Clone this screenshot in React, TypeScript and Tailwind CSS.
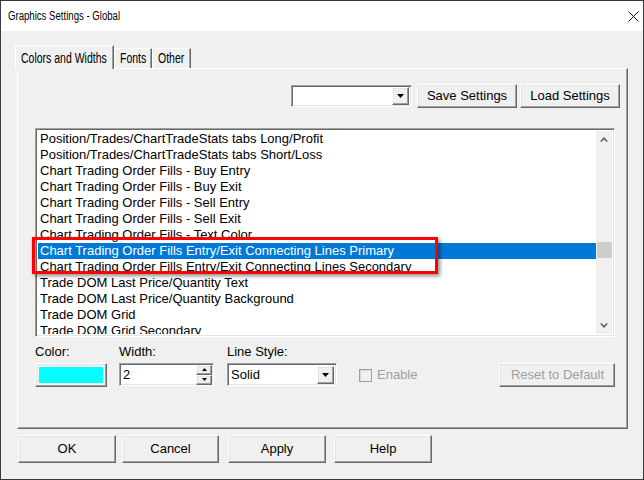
import React from "react";

const raised =
  "border border-t-white border-l-white border-r-[#696969] border-b-[#696969] shadow-[inset_-1px_-1px_0_#a0a0a0,inset_1px_1px_0_#e3e3e3] bg-[#f0f0f0]";
const sunken =
  "border border-t-[#a0a0a0] border-l-[#a0a0a0] border-r-white border-b-white shadow-[inset_1px_1px_0_#696969,inset_-1px_-1px_0_#e3e3e3]";

const items = [
  "Position/Trades/ChartTradeStats tabs Long/Profit",
  "Position/Trades/ChartTradeStats tabs Short/Loss",
  "Chart Trading Order Fills - Buy Entry",
  "Chart Trading Order Fills - Buy Exit",
  "Chart Trading Order Fills - Sell Entry",
  "Chart Trading Order Fills - Sell Exit",
  "Chart Trading Order Fills - Text Color",
  "Chart Trading Order Fills Entry/Exit Connecting Lines Primary",
  "Chart Trading Order Fills Entry/Exit Connecting Lines Secondary",
  "Trade DOM Last Price/Quantity Text",
  "Trade DOM Last Price/Quantity Background",
  "Trade DOM Grid",
  "Trade DOM Grid Secondary",
];

function DownArrow() {
  return (
    <svg width="7" height="4" viewBox="0 0 7 4">
      <path d="M0 0 H7 L3.5 4 Z" fill="#000" />
    </svg>
  );
}

function Button({ label, w, cls = "" }: { label: string; w: string; cls?: string }) {
  return (
    <div className={`${raised} ${w} h-[28px] flex items-center justify-center text-[13px] text-black ${cls}`}>
      {label}
    </div>
  );
}

const narrow = "inline-block whitespace-nowrap origin-left scale-x-[0.8]";
const narrowTab = "inline-block whitespace-nowrap origin-left scale-x-[0.75] text-[14px]";

export default function App() {
  return (
    <div className="w-[644px] h-[480px] bg-[#f0f0f0] border border-[#3a3a3a] flex flex-col font-['Liberation_Sans',Arial,sans-serif] text-[13px] text-black overflow-hidden">
      {/* Title bar */}
      <div className="h-[30px] bg-white flex items-center justify-between pl-[7px] pr-[2px] shrink-0">
        <span className={`${narrow} text-[12px] text-black`}>Graphics Settings - Global</span>
        <div className="w-[14px] h-[14px] mr-[1px] flex items-center justify-center">
          <svg width="11" height="11" viewBox="0 0 11 11">
            <path d="M0.5 0.5 L10.5 10.5 M10.5 0.5 L0.5 10.5" stroke="#111" strokeWidth="1" />
          </svg>
        </div>
      </div>

      {/* Body */}
      <div className="flex-1 pl-[16px] pt-[14px] flex flex-col">
        {/* Tabs */}
        <div className="flex items-end h-[23px] relative z-10">
          <div className="h-[24px] w-[99px] -ml-[2px] border border-b-0 border-t-white border-l-white border-r-[#696969] bg-[#f0f0f0] shadow-[inset_-1px_0_0_#a0a0a0] flex items-start pt-[2px] pl-[5px] relative top-[1px]">
            <span className={narrowTab}>Colors and Widths</span>
          </div>
          <div className="h-[20px] w-[38px] border border-b-0 border-t-white border-l-white border-r-[#696969] shadow-[inset_-1px_0_0_#a0a0a0] flex items-center pl-[5px]">
            <span className={narrowTab}>Fonts</span>
          </div>
          <div className="h-[20px] w-[39px] border border-b-0 border-t-white border-l-white border-r-[#696969] shadow-[inset_-1px_0_0_#a0a0a0] flex items-center pl-[5px]">
            <span className={narrowTab}>Other</span>
          </div>
        </div>

        {/* Panel */}
        <div className="w-[611px] h-[361px] border border-t-white border-l-white border-r-[#696969] border-b-[#696969] shadow-[inset_-1px_-1px_0_#a0a0a0] flex flex-col pl-[17px] pt-[15px]">
          {/* top row */}
          <div className="flex items-center h-[23px] pl-[256px]">
            <div className={`${sunken} bg-white w-[121px] h-[22px] flex items-center justify-end pr-[2px]`}>
              <div className={`${raised} w-[17px] h-[18px] flex items-center justify-center`}>
                <DownArrow />
              </div>
            </div>
            <div className={`${raised} w-[100px] h-[24px] ml-[5px] flex items-center justify-center`}>Save Settings</div>
            <div className={`${raised} w-[100px] h-[24px] ml-[3px] flex items-center justify-center`}>Load Settings</div>
          </div>

          {/* listbox */}
          <div className="relative mt-[21px] w-[580px] h-[209px]">
            <div className={`${sunken} bg-white w-full h-full flex p-[2px] overflow-hidden`}>
              <div className="flex-1 overflow-hidden">
                {items.map((t, i) => (
                  <div
                    key={i}
                    className={`h-[16px] leading-[15px] pl-[2px] whitespace-nowrap ${
                      i === 7 ? "bg-[#0078d7] text-white" : "text-black"
                    }`}
                  >
                    {t}
                  </div>
                ))}
              </div>
              <div className="w-[16px] bg-[#f0f0f0] flex flex-col items-center">
                <div className="h-[17px] w-full flex items-center justify-center">
                  <svg width="8" height="5" viewBox="0 0 8 5">
                    <path d="M0.8 4.5 L4 1.2 L7.2 4.5" stroke="#606060" strokeWidth="1.6" fill="none" />
                  </svg>
                </div>
                <div className="h-[94px]" />
                <div className="h-[16px] w-[15px] bg-[#cdcdcd] ml-[1px]" />
                <div className="flex-1" />
                <div className="h-[17px] w-full flex items-center justify-center">
                  <svg width="8" height="5" viewBox="0 0 8 5">
                    <path d="M0.8 0.5 L4 3.8 L7.2 0.5" stroke="#606060" strokeWidth="1.6" fill="none" />
                  </svg>
                </div>
              </div>
            </div>
            {/* highlight box */}
            <div className="absolute left-[-3px] top-[109px] w-[406px] h-[37px] border-[3px] border-[#ff0000] shadow-[2px_2px_4px_rgba(0,0,0,0.45)] pointer-events-none" />
          </div>

          {/* bottom controls */}
          <div className="flex mt-[7px]">
            <div className="flex flex-col w-[84px]">
              <div className="h-[15px] leading-[15px]">Color:</div>
              <div className={`${raised} mt-[4px] w-[72px] h-[24px] flex items-center justify-center`}>
                <div className="w-[64px] h-[16px] bg-[#00ffff]" />
              </div>
            </div>
            <div className="flex flex-col w-[108px]">
              <div className="h-[15px] leading-[15px]">Width:</div>
              <div className={`${sunken} bg-white mt-[4px] w-[95px] h-[23px] flex items-center justify-between pl-[3px] pr-[1px]`}>
                <span>2</span>
                <div className="flex flex-col">
                  <div className={`${raised} w-[16px] h-[10px] flex items-center justify-center`}>
                    <svg width="5" height="3" viewBox="0 0 5 3"><path d="M0 3 H5 L2.5 0 Z" fill="#000" /></svg>
                  </div>
                  <div className={`${raised} w-[16px] h-[10px] flex items-center justify-center`}>
                    <svg width="5" height="3" viewBox="0 0 5 3"><path d="M0 0 H5 L2.5 3 Z" fill="#000" /></svg>
                  </div>
                </div>
              </div>
            </div>
            <div className="flex flex-col w-[132px]">
              <div className="h-[15px] leading-[15px]">Line Style:</div>
              <div className={`${sunken} bg-white mt-[4px] w-[110px] h-[23px] flex items-center justify-between pl-[3px] pr-[2px]`}>
                <span>Solid</span>
                <div className={`${raised} w-[17px] h-[18px] flex items-center justify-center`}>
                  <DownArrow />
                </div>
              </div>
            </div>
            <div className="flex flex-col">
              <div className="h-[15px]" />
              <div className="mt-[4px] h-[24px] flex items-center">
                <div className="w-[13px] h-[13px] border border-[#a0a0a0] bg-[#f0f0f0] shadow-[inset_1px_1px_0_#d8d8d8]" />
                <span className="ml-[5px] text-[#a0a0a0]">Enable</span>
              </div>
            </div>
            <div className="flex flex-col ml-[82px]">
              <div className="h-[15px]" />
              <div className={`${raised} mt-[4px] w-[116px] h-[24px] flex items-center justify-center text-[#a0a0a0]`}>
                Reset to Default
              </div>
            </div>
          </div>
        </div>

        {/* bottom buttons */}
        <div className="flex mt-[6px] ml-[1px]">
          <Button label="OK" w="w-[98px]" />
          <Button label="Cancel" w="w-[97px]" cls="ml-[6px]" />
          <Button label="Apply" w="w-[98px]" cls="ml-[9px]" />
          <Button label="Help" w="w-[98px]" cls="ml-[8px]" />
        </div>
      </div>
    </div>
  );
}
